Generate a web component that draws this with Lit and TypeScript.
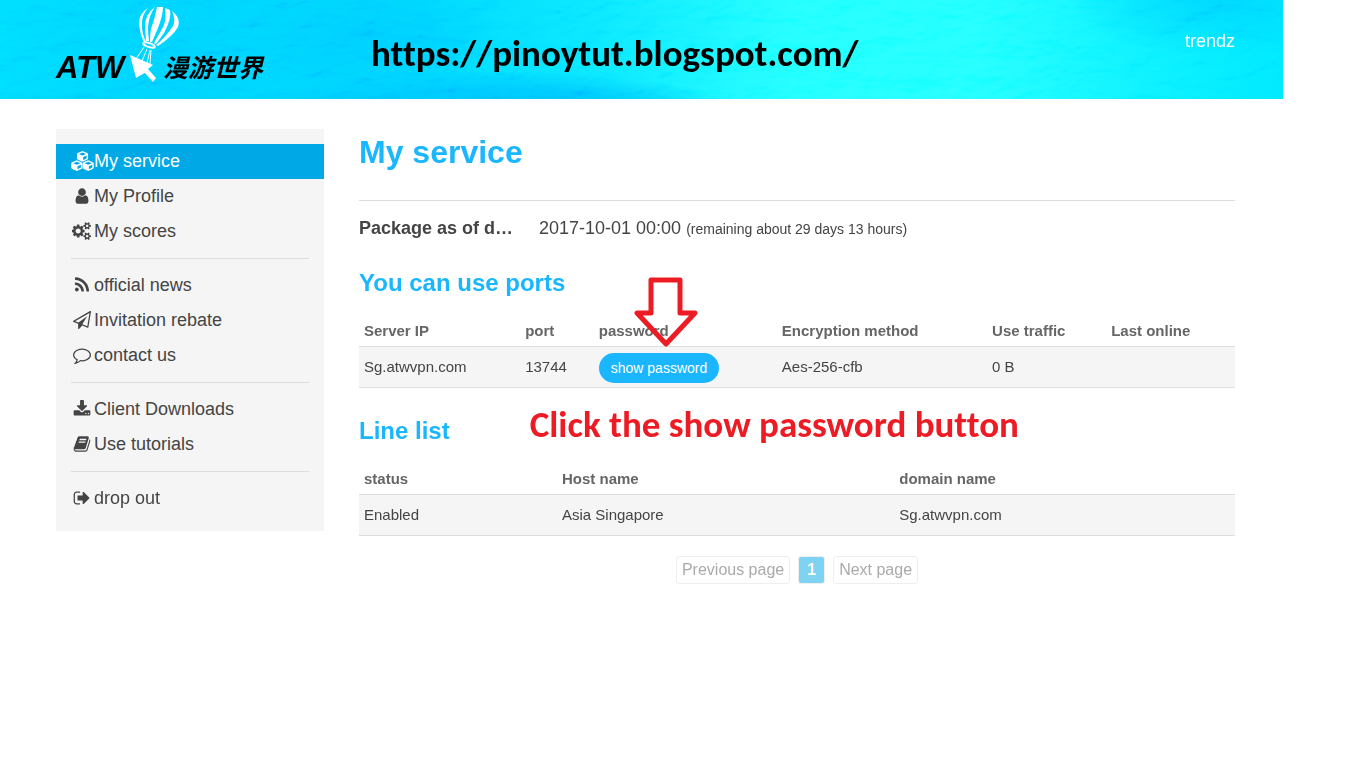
import { LitElement, html, css, svg } from "lit";
import { customElement } from "lit/decorators.js";

const ICONS: Record<string, { w: number; d: string }> = {
  user: { w: 1792, d: "M1536 1399q0 109-62.5 187t-150.5 78h-854q-88 0-150.5-78t-62.5-187q0-85 8.5-160.5t31.5-152 58.5-131 94-89 134.5-34.5q131 128 313 128t313-128q76 0 134.5 34.5t94 89 58.5 131 31.5 152 8.5 160.5zm-256-887q0 159-112.5 271.5t-271.5 112.5-271.5-112.5-112.5-271.5 112.5-271.5 271.5-112.5 271.5 112.5 112.5 271.5z" },
  cogs: { w: 1920, d: "M832 896q0-106-75-181t-181-75-181 75-75 181 75 181 181 75 181-75 75-181zm768 512q0-52-38-90t-90-38-90 38-38 90q0 53 37.5 90.5t90.5 37.5 90.5-37.5 37.5-90.5zm0-1024q0-52-38-90t-90-38-90 38-38 90q0 53 37.5 90.5t90.5 37.5 90.5-37.5 37.5-90.5zm-384 421v185q0 10-7 19.5t-16 10.5l-155 24q-11 35-32 76 34 48 90 115 7 11 7 20 0 12-7 19-23 30-82.5 89.5t-78.5 59.5q-11 0-21-7l-115-90q-37 19-77 31-11 108-23 155-7 24-30 24h-186q-11 0-20-7.5t-10-17.5l-23-153q-34-10-75-31l-118 89q-7 7-20 7-11 0-21-8-144-133-144-160 0-9 7-19 10-14 41-53t47-61q-23-44-35-82l-152-24q-10-1-17-9.5t-7-19.5v-185q0-10 7-19.5t16-10.5l155-24q11-35 32-76-34-48-90-115-7-11-7-20 0-12 7-20 22-30 82-89t79-59q11 0 21 7l115 90q34-18 77-32 11-108 23-154 7-24 30-24h186q11 0 20 7.5t10 17.5l23 153q34 10 75 31l118-89q8-7 20-7 11 0 21 8 144 133 144 160 0 8-7 19-12 16-42 54t-45 60q23 48 34 82l152 23q10 2 17 10.5t7 19.5zm640 533v140q0 16-149 31-12 27-30 52 51 113 51 138 0 4-4 7-122 71-124 71-8 0-46-47t-52-68q-20 2-30 2t-30-2q-14 21-52 68t-46 47q-2 0-124-71-4-3-4-7 0-25 51-138-18-25-30-52-149-15-149-31v-140q0-16 149-31 13-29 30-52-51-113-51-138 0-4 4-7 4-2 35-20t59-34 30-16q8 0 46 46.5t52 67.5q20-2 30-2t30 2q51-71 92-112l6-2q4 0 124 70 4 3 4 7 0 25-51 138 17 23 30 52 149 15 149 31zm0-1024v140q0 16-149 31-12 27-30 52 51 113 51 138 0 4-4 7-122 71-124 71-8 0-46-47t-52-68q-20 2-30 2t-30-2q-14 21-52 68t-46 47q-2 0-124-71-4-3-4-7 0-25 51-138-18-25-30-52-149-15-149-31v-140q0-16 149-31 13-29 30-52-51-113-51-138 0-4 4-7 4-2 35-20t59-34 30-16q8 0 46 46.5t52 67.5q20-2 30-2t30 2q51-71 92-112l6-2q4 0 124 70 4 3 4 7 0 25-51 138 17 23 30 52 149 15 149 31z" },
  rss: { w: 1792, d: "M576 1344q0 80-56 136t-136 56-136-56-56-136 56-136 136-56 136 56 56 136zm512 123q2 28-17 48-18 21-47 21h-135q-25 0-43-16.5t-20-41.5q-22-229-184.5-391.5t-391.5-184.5q-25-2-41.5-20t-16.5-43v-135q0-29 21-47 17-17 43-17h5q160 13 306 80.5t259 181.5q114 113 181.5 259t80.5 306zm512 2q2 27-18 47-18 20-46 20h-143q-26 0-44.5-17.5t-19.5-42.5q-12-215-101-408.5t-231.5-336-336-231.5-408.5-102q-25-1-42.5-19.5t-17.5-43.5v-143q0-28 20-46 18-18 44-18h3q262 13 501.5 120t425.5 294q187 186 294 425.5t120 501.5z" },
  plane: { w: 1792, d: "M1764 11q33 24 27 64l-256 1536q-5 29-32 45-14 8-31 8-11 0-24-5l-527-215-298 327q-18 21-47 21-14 0-23-4-19-7-30-23.5t-11-36.5v-452l-472-193q-37-14-40-55-3-39 32-59l1664-960q35-21 68 2zm-342 1499l221-1323-1434 827 336 137 863-639-478 797z" },
  comment: { w: 1792, d: "M896 384q-204 0-381.5 69.5t-282 187.5-104.5 255q0 112 71.5 213.5t201.5 175.5l87 50-27 96q-24 91-70 172 152-63 275-171l43-38 57 6q69 8 130 8 204 0 381.5-69.5t282-187.5 104.5-255-104.5-255-282-187.5-381.5-69.5zm896 512q0 174-120 321.5t-326 233-450 85.5q-70 0-145-8-198 175-460 242-49 14-114 22h-5q-15 0-27-10.5t-16-27.5v-1q-3-4-.5-12t2-10 4.5-9.5l6-9 7-8.5 8-9q7-8 31-34.5t34.5-38 31-39.5 32.5-51 27-59 26-76q-157-89-247.5-220t-90.5-281q0-174 120-321.5t326-233 450-85.5 450 85.5 326 233 120 321.5z" },
  download: { w: 1792, d: "M1344 1344q0-26-19-45t-45-19-45 19-19 45 19 45 45 19 45-19 19-45zm256 0q0-26-19-45t-45-19-45 19-19 45 19 45 45 19 45-19 19-45zm128-224v320q0 40-28 68t-68 28h-1472q-40 0-68-28t-28-68v-320q0-40 28-68t68-28h465l135 136q58 56 136 56t136-56l136-136h464q40 0 68 28t28 68zm-325-569q17 41-14 70l-448 448q-18 19-45 19t-45-19l-448-448q-31-29-14-70 17-39 59-39h256v-448q0-26 19-45t45-19h256q26 0 45 19t19 45v448h256q42 0 59 39z" },
  book: { w: 1792, d: "M1703 478q40 57 18 129l-275 906q-19 64-76.5 107.5t-122.5 43.5h-923q-77 0-148.5-53.5t-99.5-131.5q-24-67-2-127 0-4 3-27t4-37q1-8-3-21.5t-3-19.5q2-11 8-21t16.5-23.5 16.5-23.5q23-38 45-91.5t30-91.5q3-10 .5-30t-.5-28q3-11 17-28t17-23q21-36 42-92t25-90q1-9-2.5-32t.5-28q4-13 22-30.5t22-22.5q19-26 42.5-84.5t27.5-96.5q1-8-3-25.5t-2-26.5q2-8 9-18t18-23 17-21q8-12 16.5-30.5t15-35 16-36 19.5-32 26.5-23.5 36-11.5 47.5 5.5l-1 3q38-9 51-9h761q74 0 114 56t18 130l-274 906q-36 119-71.5 153.5t-128.5 34.5h-869q-27 0-38 15-11 16-1 43 24 70 144 70h923q29 0 56-15.5t35-41.5l300-987q7-22 5-57 38 15 59 43zm-1064 2q-4 13 2 22.5t20 9.5h608q13 0 25.5-9.5t16.5-22.5l21-64q4-13-2-22.5t-20-9.5h-608q-13 0-25.5 9.5t-16.5 22.5zm-83 256q-4 13 2 22.5t20 9.5h608q13 0 25.5-9.5t16.5-22.5l21-64q4-13-2-22.5t-20-9.5h-608q-13 0-25.5 9.5t-16.5 22.5z" },
  signout: { w: 1792, d: "M704 1440q0 4 1 20t.5 26.5-3 23.5-10 19.5-20.5 6.5h-320q-119 0-203.5-84.5t-84.5-203.5v-704q0-119 84.5-203.5t203.5-84.5h320q13 0 22.5 9.5t9.5 22.5q0 4 1 20t.5 26.5-3 23.5-10 19.5-20.5 6.5h-320q-66 0-113 47t-47 113v704q0 66 47 113t113 47h312l11.5 1 11.5 3 8 5.5 7 9 2 13.5zm928-544q0 26-19 45l-544 544q-19 19-45 19t-45-19-19-45v-288h-448q-26 0-45-19t-19-45v-384q0-26 19-45t45-19h448v-288q0-26 19-45t45-19 45 19l544 544q19 19 19 45z" },
};

/* One cube: a solid body with the top face and the right face cut out. */
const CUBE =
  "M640 0 1060 170Q1140 200 1140 270V660Q1140 720 1080 750L690 930Q640 955 590 930L200 750Q140 720 140 660V270Q140 200 220 170ZM640 130 310 262 640 400 970 262ZM700 530V800L1010 655V400Z";

const icon = (name: string) => {
  if (name === "cubes") {
    return html`<svg class="icon wide" viewBox="130 -10 2044 1800" aria-hidden="true">
      ${[[512, 0], [0, 830], [1024, 830]].map(
        ([x, y]) => svg`<path fill-rule="evenodd" transform="translate(${x} ${y})" d=${CUBE}></path>`
      )}
    </svg>`;
  }
  const { w, d } = ICONS[name];
  return html`<svg class="icon ${w > 1792 ? "mid" : ""}" viewBox="0 0 ${w} 1792" aria-hidden="true">
    <path d=${d}></path>
  </svg>`;
};

const MENU = [
  [["cubes", "My service"], ["user", "My Profile"], ["cogs", "My scores"]],
  [["rss", "official news"], ["plane", "Invitation rebate"], ["comment", "contact us"]],
  [["download", "Client Downloads"], ["book", "Use tutorials"]],
  [["signout", "drop out"]],
];

@customElement("site-header")
export class SiteHeader extends LitElement {
  static styles = css`
    :host { display: block; }
    .bar {
      position: relative;
      display: flex;
      height: 99px;
      padding: 0 48px 0 56px;
      overflow: hidden;
      background:
        radial-gradient(ellipse 240px 36px at 38% 108%, #00c8ff 0 50%, transparent 100%),
        radial-gradient(ellipse 130px 60px at 29% 40%, #00ccff, transparent),
        radial-gradient(ellipse 150px 60px at 95% 0, #00d6ff, transparent),
        linear-gradient(90deg, #00dcff, #00d2ff 12%, #00d8ff 33%, #08e6ff 46%, #1effff 62%, #1effff 76%, #0cf2ff 88%, #00e8ff);
    }
    .texture { position: absolute; inset: 0; width: 100%; height: 100%; opacity: 0.25; mix-blend-mode: soft-light; }
    .logo { position: relative; display: flex; align-items: flex-end; height: 82px; color: #000; text-decoration: none; }
    .latin { width: 74px; font: italic 700 31px/29px "Liberation Sans", sans-serif; }
    .balloon { width: 50px; height: 76px; fill: #fff; }
    .cjk { width: 101px; margin-left: -17px; font: italic 700 25px/32px "Noto Sans CJK SC", sans-serif; white-space: nowrap; }
    .url {
      position: relative;
      flex: 1;
      padding: 32px 0 0 107px;
      color: #000;
      font: 700 37px/44px Carlito, Lato, sans-serif;
      font-variant-ligatures: none;
    }
    .account { position: relative; padding-top: 30px; color: #fff; font: 18px/22px "Liberation Sans", sans-serif; text-decoration: none; }
  `;
  render() {
    return html`<header class="bar">
      <svg class="texture" aria-hidden="true">
        <filter id="relief" x="0" y="0" width="100%" height="100%">
          <feTurbulence type="fractalNoise" baseFrequency="0.03 0.06" numOctaves="3" seed="8"></feTurbulence>
          <feDiffuseLighting surfaceScale="9" lighting-color="#fff"><feDistantLight azimuth="235" elevation="45"></feDistantLight></feDiffuseLighting>
        </filter>
        <rect width="100%" height="100%" filter="url(#relief)"></rect>
      </svg>
      <a class="logo" href="#">
        <span class="latin">ATW</span>
        <svg class="balloon" viewBox="0 0 50 76" aria-hidden="true">
          <path d="M18 2Q8 8 9 19 10 28 14 37L16 36Q12 28 12 20 11 10 18 2Z"></path>
          <path d="M25 1Q15 8 15 21L16 35H19Q18 28 18 21 19 9 25 1Z"></path>
          <path d="M27 1H33Q33 9 28 22L22 36H20Q20 29 21 23 25 12 27 1Z"></path>
          <path d="M35 2 40 4Q42 12 34 27L26 38 24 37Q28 30 33 21 37 13 35 2Z"></path>
          <path d="M42 5Q51 12 48 21 43 30 28 40L26 39Q36 31 43 20 46 13 42 5Z"></path>
          <ellipse cx="19" cy="39" rx="6" ry="2" transform="rotate(18 19 39)" fill="none" stroke="#fff" stroke-width="2"></ellipse>
          <path d="M14 41 6 53M17 43 12 55M20 44 17 57M21 44 20 58" fill="none" stroke="#fff"></path>
          <path d="M0 49 23 59 18 63 26 72 23 76 15 67 11 69 6 72Z"></path>
        </svg>
        <span class="cjk">漫游世界</span>
      </a>
      <div class="url">https://pinoytut.blogspot.com/</div>
      <a class="account" href="#">trendz</a>
    </header>`;
  }
}

@customElement("side-menu")
export class SideMenu extends LitElement {
  static styles = css`
    :host { display: block; }
    .menu { background: #f5f5f5; padding: 15px 0; }
    .group { list-style: none; margin: 0; padding: 0; }
    .group + .group::before { content: ""; display: block; height: 1px; margin: 9px 15px; background: #ddd; }
    .item { display: flex; align-items: center; height: 35px; padding: 0 14px; color: #444; text-decoration: none; font: 18px/35px "Liberation Sans", sans-serif; }
    .active { background: #00a8e6; color: #fff; }
    .slot { display: flex; justify-content: center; width: 24px; padding-bottom: 2px; }
    .icon { width: 18px; height: 18px; fill: currentColor; flex: none; }
    .wide { width: 23px; height: 20px; }
    .mid { width: 20px; }
  `;
  render() {
    return html`<nav class="menu">
      ${MENU.map(
        (group) => html`<ul class="group">
          ${group.map(
            ([name, label]) => html`<li>
              <a class="item ${name === "cubes" ? "active" : ""}" href="#"><span class="slot">${icon(name)}</span>${label}</a>
            </li>`
          )}
        </ul>`
      )}
    </nav>`;
  }
}

@customElement("app-root")
export class AppRoot extends LitElement {
  static styles = css`
    :host { display: block; padding-right: 83px; color: #444; font: 16px/20px "Liberation Sans", Arial, sans-serif; }
    .layout { display: grid; grid-template-columns: 268px minmax(0, 1fr); gap: 35px; align-items: start; padding: 30px 48px 0 56px; }
    h1, h2 { margin: 0; color: #1ab6ff; font-weight: 700; }
    h1 { font-size: 32px; line-height: 46px; padding-bottom: 25px; border-bottom: 1px solid #ddd; }
    h2 { font-size: 24px; line-height: 30px; }
    .package { display: flex; align-items: baseline; gap: 20px; margin: 15px 0 27px; font-size: 18px; line-height: 24px; }
    .label { width: 160px; font-weight: 700; overflow: hidden; text-overflow: ellipsis; white-space: nowrap; }
    .remaining { font-size: 14px; }
    .data { width: 100%; margin-top: 18px; border-collapse: collapse; table-layout: fixed; font-size: 15px; line-height: 20px; text-align: left; }
    .data th { padding: 5px; color: #666; font-weight: 700; border-bottom: 1px solid #ddd; }
    .data td { height: 40px; padding: 0 5px; background: #f5f5f5; border-bottom: 1px solid #ddd; }
    .w8 { width: 8.4%; } .w14 { width: 13.6%; } .w15 { width: 14.7%; } .w18 { width: 18.4%; }
    .w21 { width: 20.9%; } .w23 { width: 22.6%; } .w24 { width: 24%; } .w38 { width: 38.5%; }
    .reveal { position: relative; display: block; width: max-content; padding-top: 1px; }
    .show { display: block; height: 30px; padding: 0 12px; border: 0; border-radius: 15px; background: #1ab6ff; color: #fff; font: 14px/30px "Liberation Sans", sans-serif; }
    .arrow { position: absolute; left: 35px; bottom: 35px; width: 64px; height: 73px; fill: none; stroke: #ed1c24; stroke-width: 5; stroke-linejoin: round; pointer-events: none; }
    .line-head { display: flex; align-items: flex-end; gap: 80px; margin-top: 19px; }
    .note { margin: 0; padding-bottom: 4px; color: #ed1c24; font: 700 37px/35px Carlito, Lato, sans-serif; font-variant-ligatures: none; white-space: nowrap; }
    .pages { display: flex; justify-content: center; gap: 8px; margin-top: 20px; }
    .page { box-sizing: border-box; height: 28px; padding: 0 5px; border: 1px solid #eee; border-radius: 3px; background: #fff; color: #aaa; font: 16px/26px "Liberation Sans", sans-serif; }
    .current { padding: 0 8px; background: #7fd3f2; color: #fff; font-weight: 700; }
  `;
  render() {
    return html`
      <site-header></site-header>
      <div class="layout">
        <side-menu></side-menu>
        <main>
          <h1>My service</h1>
          <div class="package">
            <span class="label">Package as of date</span>
            <span>2017-10-01 00:00 <span class="remaining">(remaining about 29 days 13 hours)</span></span>
          </div>
          <h2>You can use ports</h2>
          <table class="data">
            <colgroup><col class="w18" /><col class="w8" /><col class="w21" /><col class="w24" /><col class="w14" /><col class="w15" /></colgroup>
            <thead><tr><th>Server IP</th><th>port</th><th>password</th><th>Encryption method</th><th>Use traffic</th><th>Last online</th></tr></thead>
            <tbody><tr>
              <td>Sg.atwvpn.com</td><td>13744</td>
              <td><div class="reveal"><button class="show" type="button">show password</button>
                <svg class="arrow" viewBox="0 0 64 73" aria-hidden="true"><path d="M17 5H46V38H61L32 69 3 38H17Z"></path></svg></div></td>
              <td>Aes-256-cfb</td><td>0 B</td><td></td>
            </tr></tbody>
          </table>
          <div class="line-head"><h2>Line list</h2><p class="note">Click the show password button</p></div>
          <table class="data">
            <colgroup><col class="w23" /><col class="w38" /><col /></colgroup>
            <thead><tr><th>status</th><th>Host name</th><th>domain name</th></tr></thead>
            <tbody><tr><td>Enabled</td><td>Asia Singapore</td><td>Sg.atwvpn.com</td></tr></tbody>
          </table>
          <div class="pages">
            <button class="page" type="button">Previous page</button>
            <button class="page current" type="button">1</button>
            <button class="page" type="button">Next page</button>
          </div>
        </main>
      </div>
    `;
  }
}
